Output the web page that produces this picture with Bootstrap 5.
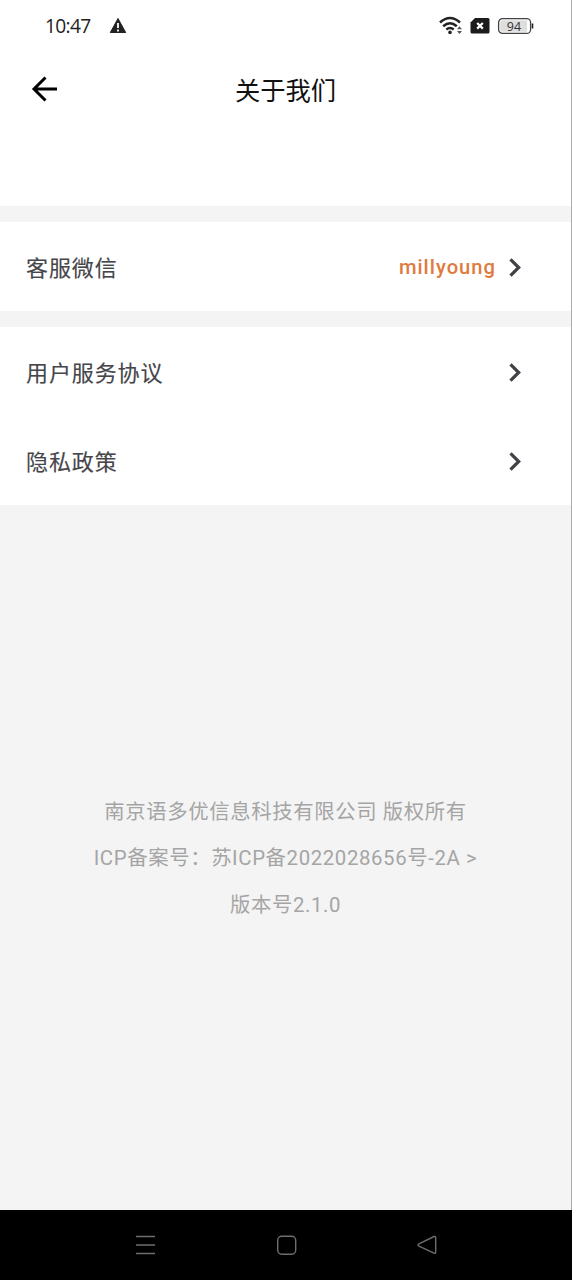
<!DOCTYPE html>
<html lang="zh-CN">
<head>
<meta charset="utf-8">
<meta name="viewport" content="width=device-width, initial-scale=1">
<title>关于我们</title>
<link href="https://cdn.jsdelivr.net/npm/bootstrap@5.3.0/dist/css/bootstrap.min.css" rel="stylesheet">
<style>
body{font-family:Roboto,"Noto Sans CJK SC",sans-serif;background:#f4f4f4}
.screen{height:1210px;border-right:1px solid #acacac}
.statusbar{height:52px;padding:0 37px 0 45px;color:#222}
.clock{font:400 19.2px/24px "Open Sans",sans-serif;letter-spacing:-.7px}
.icon-warn{margin-left:18px}
.icon-sim{margin-left:7px}
.icon-battery{margin-left:7px}
.titlebar{height:76px;padding-top:3px}
.icon-back{margin-top:-1px}
.page-title{font-size:25.3px;line-height:36px;color:#111}
.logo-space{height:78px}
.section-gap{height:16px}
.item{height:89px;padding:0 50px 0 26px!important;color:#46464a;font-size:22px;letter-spacing:.9px;line-height:32px}
.item .label-text{padding-top:5px;-webkit-text-stroke:.15px #46464a}
.item .value{font-size:20.2px;font-weight:500;letter-spacing:1px;color:#e07b3e}
.value + svg{margin-left:12px}
.legal{padding-top:283.5px;font-size:20.4px;letter-spacing:.6px;line-height:46.7px;color:#a5a5a5}
.navkeys{height:70px}
svg{display:block;flex:none}
</style>
</head>
<body>
<main class="screen d-flex flex-column">
  <header class="bg-white">
    <div class="statusbar d-flex align-items-center">
      <span class="clock">10:47</span>
      <svg class="icon-warn" width="20" height="18" viewBox="0 0 20 18"><path d="M10 1.500 17.700 15.500H2.300Z" fill="#222" stroke="#222" stroke-linejoin="round"/><path d="M10 6v5M10 12.500v2" stroke="#fff" stroke-width="1.800"/></svg>
      <div class="d-flex align-items-center ms-auto">
        <svg width="24" height="20" viewBox="0 0 24 20" fill="none" stroke="#222"><path d="M1 6.500Q11 -2.500 21 6.500M4.200 10.200Q11 4.200 17.800 10.200M7.300 13.500Q11 10.500 14.700 13.500" stroke-width="2.500"/><circle cx="11" cy="16.400" r="1.800" fill="#222" stroke="none"/><path d="M18 13.200 20.500 10.300 23 13.200ZM18 15 20.500 17.900 23 15Z" fill="#555" stroke="none"/></svg>
        <svg class="icon-sim" width="20" height="16" viewBox="0 0 20 16"><path d="M5 0H18Q19.500 0 19.500 1.500V14Q19.500 15.500 18 15.500H2Q.5 15.500.5 14V4.500Z" fill="#1c1c1c"/><path d="m7.200 5 5.600 5.600m0-5.600-5.600 5.600" stroke="#fff" stroke-width="2.200"/></svg>
        <svg class="icon-battery" width="37" height="18" viewBox="0 0 37 18"><rect x="1.600" y="1.600" width="32" height="14.800" rx="4" fill="#fff" stroke="#444" stroke-width="1.300"/><path d="M6 3.200H30V14.800H6Q3.200 14.800 3.200 12V6Q3.200 3.200 6 3.200" fill="#dedede"/><path d="M35.500 6.500v5" stroke="#222" stroke-width="1.600"/><text x="17" y="13.500" text-anchor="middle" font-family="Open Sans" font-size="12.500" fill="#333">94</text></svg>
      </div>
    </div>
    <div class="titlebar position-relative d-flex align-items-center justify-content-center">
      <svg class="icon-back position-absolute top-50 start-0 translate-middle-y" width="60" height="28" viewBox="0 0 60 28" fill="none" stroke="#000" stroke-width="3"><path d="M57 14H34M45.500 2.500 34 14 45.500 25.500"/></svg>
      <h1 class="page-title fw-normal mb-0">关于我们</h1>
    </div>
    <div class="logo-space"></div>
  </header>
  <div class="section-gap"></div>
  <div class="list-group list-group-flush">
    <div class="item list-group-item border-0 d-flex align-items-center">
      <span class="label-text">客服微信</span><span class="value ms-auto">millyoung</span>
      <svg width="13" height="20" viewBox="0 0 13 20" fill="none" stroke="#424246" stroke-width="3.200"><path d="M2.500 2.300 10.700 10.500 2.500 18.700"/></svg>
    </div>
  </div>
  <div class="section-gap"></div>
  <div class="list-group list-group-flush">
    <div class="item list-group-item border-0 d-flex align-items-center justify-content-between">
      <span class="label-text">用户服务协议</span>
      <svg width="13" height="20" viewBox="0 0 13 20" fill="none" stroke="#424246" stroke-width="3.200"><path d="M2.500 2.300 10.700 10.500 2.500 18.700"/></svg>
    </div>
    <div class="item list-group-item border-0 d-flex align-items-center justify-content-between">
      <span class="label-text">隐私政策</span>
      <svg width="13" height="20" viewBox="0 0 13 20" fill="none" stroke="#424246" stroke-width="3.200"><path d="M2.500 2.300 10.700 10.500 2.500 18.700"/></svg>
    </div>
  </div>
  <footer class="legal text-center">
    <div>南京语多优信息科技有限公司 版权所有</div>
    <div>ICP备案号：苏ICP备2022028656号-2A &gt;</div>
    <div>版本号2.1.0</div>
  </footer>
</main>
<nav class="navkeys bg-black d-flex align-items-center justify-content-center">
  <svg width="572" height="70" viewBox="0 0 572 70" fill="none" stroke="#6e6e6e" stroke-width="1.400"><path d="M136 26.500h19M136 35h19M136 43.500h19"/><rect x="277.700" y="26.200" width="18" height="18" rx="4"/><path d="M434 26.500 419 33.800Q417.200 35 419 36.200L434 43.200Q435.700 43.700 435.700 42V28Q435.700 26 434 26.500Z"/></svg>
</nav>
<script src="https://cdn.jsdelivr.net/npm/bootstrap@5.3.0/dist/js/bootstrap.bundle.min.js"></script>
</body>
</html>
